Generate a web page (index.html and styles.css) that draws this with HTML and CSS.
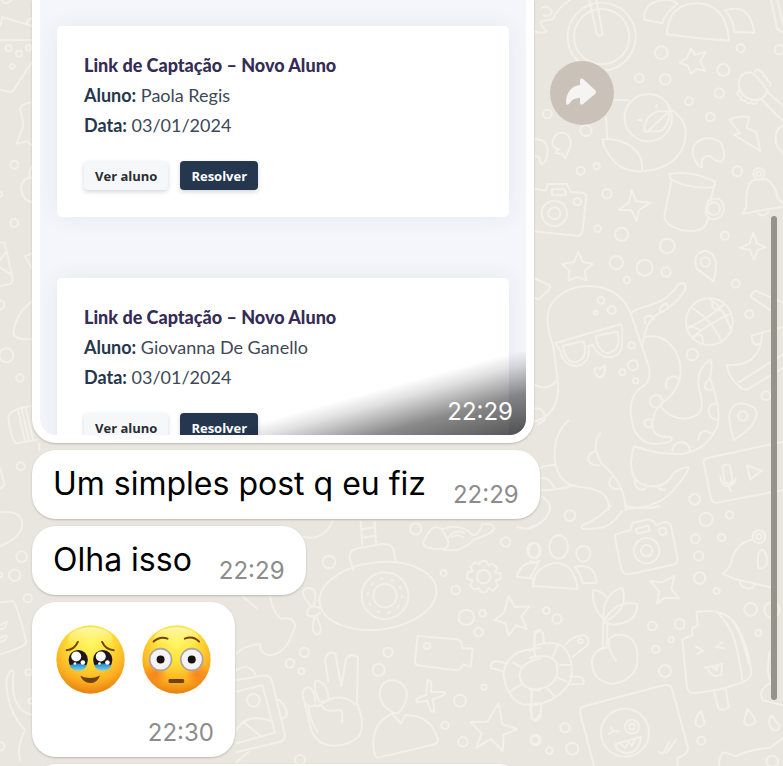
FILE: index.html
```html
<!DOCTYPE html>
<html lang="pt-BR">
  <head>
    <meta charset="UTF-8" />
    <meta name="viewport" content="width=device-width, initial-scale=1.0" />
    <title>Conversa</title>
    <link rel="stylesheet" href="styles.css">
  </head>
  <body>
    <!-- Papel de parede da conversa -->
    <svg class="wallpaper" viewBox="0 0 783 766" preserveAspectRatio="xMinYMin slice" aria-hidden="true">
      <!-- Topo, direita -->
      <g transform="translate(530 0) scale(.3333)">
        <circle cx="215" cy="110" r="102" /><circle cx="215" cy="110" r="83" />
        <path d="M178 0L200 102Q209 113 218 102L199 0M15 95Q38 100 50 94L36 78Q28 64 40 62L68 58Q84 22 120 0M36 22Q55 15 66 34Q60 52 42 46" />
        <path d="M410 103Q418 8 505 10Q590 16 597 122Q505 117 410 103ZM397 70L343 59Q340 14 385 3Q425-8 442 12Q407 36 397 70ZM585 31Q660 7 673 98L613 96Q610 55 585 31ZM723 0L742 88L760 96M742 0L760 76" />
        <path d="M483 146L495 164L526 157L511 184L525 212L499 207L483 222L474 198L449 187L471 174Z" />
        <path d="M626 250Q632 212 666 218L684 234L712 271Q704 303 671 300Q626 292 626 250ZM712 276L760 318M696 300L760 365M675 214Q684 202 692 216Q702 214 701 228Q714 230 711 243Q725 245 720 257M625 274Q618 286 632 290Q632 304 647 302Q652 316 663 306Q677 320 682 306M760 375Q728 393 740 435L760 463" />
        <path d="M598 359Q630 344 657 352L650 384L679 396L691 453L613 405L630 400Z" />
        <circle cx="355" cy="353" r="71" />
        <path d="M252 300L298 301M228 350L232 416M415 325Q475 355 466 418Q448 503 342 514Q292 517 260 492Q220 450 217 420Q240 411 290 431Q340 458 336 510M344 395Q340 348 385 334L418 333Q420 376 390 394ZM355 392L416 335M380 315L378 321M325 360L335 361" />
        <path d="M510 501Q481 470 490 440Q514 407 548 416Q578 422 578 443Q590 470 574 485Q556 486 540 467Q509 468 516 501ZM15 418Q54 418 53 452Q50 490 34 493L28 473L15 468M67 429Q72 396 101 398Q125 407 122 438L105 475L95 462L76 459L87 448Q70 446 67 429Z" />
        <path d="M425 540L403 648Q404 675 453 690Q507 700 527 676L535 652M552 560L542 598M419 522Q486 510 555 545Q557 565 530 563Q456 562 420 535ZM535 602Q570 586 580 613Q587 649 555 658Q522 660 530 618Z" /><circle cx="551" cy="626" r="19" />
        <path d="M305 570L318 604L362 608L327 630L320 663L304 631L266 629L297 608Z" />
        <path d="M638 641L649 621Q645 551 673 539L710 538Q738 555 743 594L760 612M638 641L760 620M684 641Q700 654 716 635" /><circle cx="687" cy="521" r="17" /><circle cx="687" cy="521" r="7" />
        <path d="M15 566L48 572L53 552L110 552L122 575L163 580Q172 586 168 600L158 690Q156 709 142 708L15 694M66 567L104 568L108 586L66 584Z" /><circle cx="73" cy="640" r="38" /><circle cx="73" cy="640" r="18" /><circle cx="142" cy="605" r="11" />
        <path d="M670 698L681 730L708 742L683 750L672 780L659 749L630 744L659 730Z" />
        <circle cx="394" cy="158" r="19" /><circle cx="328" cy="234" r="13" /><circle cx="406" cy="238" r="16" /><circle cx="580" cy="210" r="18" /><circle cx="632" cy="145" r="12" /><circle cx="748" cy="149" r="14" /><circle cx="568" cy="279" r="14" /><circle cx="477" cy="304" r="12" /><circle cx="541" cy="351" r="13" /><circle cx="52" cy="342" r="13" /><circle cx="168" cy="392" r="17" /><circle cx="152" cy="512" r="12" /><circle cx="200" cy="499" r="9" /><circle cx="231" cy="581" r="14" /><circle cx="622" cy="514" r="15" /><circle cx="203" cy="686" r="10" /><circle cx="275" cy="703" r="20" /><circle cx="585" cy="707" r="12" /><circle cx="412" cy="738" r="22" />
      </g>
      <!-- Polvo, bola e microfone -->
      <g transform="translate(530 250) scale(.3333)">
        <path d="M145 5L158 35L188 42L164 63L169 91L142 81L115 91L119 62L96 42L132 36ZM15 86L58 105Q66 112 54 122L27 148L15 145" />
        <path d="M15 515Q89 493 84 400Q78 350 70 290Q35 193 70 155Q108 108 180 108Q271 112 302 190L355 345Q366 385 345 405Q282 440 311 535Q340 600 420 575Q435 558 406 561Q354 557 371 498Q379 470 417 442Q467 391 445 322Q416 249 343 260M302 190Q315 177 360 166Q415 150 446 103Q473 91 465 120Q445 154 406 180Q350 204 343 260L337 285" />
        <path d="M76 279L272 223Q280 225 275 293Q268 322 233 322Q201 316 188 284L175 288Q184 338 141 348Q99 348 91 302ZM99 287L161 273Q177 332 132 337Q104 333 99 287ZM197 258L262 245Q277 299 234 310Q202 303 197 258Z" />
        <path d="M391 468Q417 505 465 506Q529 500 513 440Q488 363 541 329Q549 340 540 385Q580 492 558 538Q524 604 454 612Q380 614 312 588M312 588Q288 672 330 700Q400 728 430 670Q456 652 475 652Q478 663 440 708Q391 776 290 776M115 512Q70 549 74 630Q86 707 150 711Q242 716 236 780M210 550Q183 586 214 640Q286 700 287 780" />
        <path d="M346 220Q338 205 352 198Q365 195 373 208M390 184Q391 163 409 160L416 172M410 414Q404 390 422 381Q439 375 449 391M539 388Q522 398 526 415Q535 424 545 420M561 461Q538 457 536 485Q540 507 560 509M427 603Q431 573 460 577Q478 582 480 603M505 568Q507 544 528 542L542 550M194 604Q174 610 175 633Q186 648 207 646M245 682Q234 692 240 708Q251 721 269 716M315 686Q311 709 329 718Q343 722 350 710M381 710Q391 722 405 719M15 475Q47 475 45 510L24 523M15 405Q50 425 79 393M15 665Q39 643 75 645M15 693Q36 676 56 690L76 715M15 720Q70 724 137 706M36 740Q62 754 61 780M193 367Q193 346 210 357L225 346Q228 382 206 382Z" />
        <circle cx="379" cy="454" r="19" /><circle cx="355" cy="520" r="12" />
        <circle cx="538" cy="215" r="70" /><path d="M474 234Q528 210 583 163M488 260Q540 218 604 190M486 174Q548 210 574 276M540 148Q585 174 604 246M478 227L514 241M488 265Q520 236 519 282M547 159Q544 182 574 181" />
        <path d="M551 94L500 56Q485 10 525 2Q573 10 551 94ZM612 570Q598 526 598 500Q602 455 642 461Q694 469 674 512Q660 540 612 570ZM721 180L674 149Q656 139 670 126Q678 119 690 128L760 158M665 257L760 230M665 257Q666 291 690 282M696 252Q696 302 663 329Q635 349 591 344Q592 378 630 412Q641 423 656 416L760 353M628 396L760 312" /><circle cx="526" cy="36" r="14" /><circle cx="638" cy="498" r="14" />
        <path d="M760 575L529 625Q518 629 522 643L543 745Q549 761 562 758L760 720M651 646L695 662L661 689ZM577 650Q588 638 600 648L608 694Q598 708 584 696ZM571 679Q576 710 594 709Q615 706 617 684M596 709L603 724" />
        <circle cx="259" cy="38" r="20" /><circle cx="344" cy="53" r="24" /><circle cx="408" cy="66" r="14" /><circle cx="291" cy="90" r="10" /><circle cx="213" cy="151" r="10" /><circle cx="245" cy="180" r="12" /><circle cx="197" cy="188" r="6" /><circle cx="305" cy="286" r="10" /><circle cx="309" cy="346" r="15" /><circle cx="277" cy="367" r="9" /><circle cx="317" cy="392" r="8" /><circle cx="487" cy="314" r="17" /><circle cx="617" cy="101" r="12" /><circle cx="658" cy="193" r="12" /><circle cx="708" cy="437" r="13" /><circle cx="494" cy="748" r="16" />
      </g>
      <!-- Base, direita -->
      <g transform="translate(530 506) scale(.3333)">
        <path d="M276 15Q244 65 200 67Q139 75 159 57Q210 36 241 0M287 0Q350 14 387 0M0 64Q58 47 60 0" />
        <path d="M257 86L301 72L307 51L351 41Q368 37 378 58L401 49Q417 45 423 60L443 158Q443 172 430 176L295 205Q280 205 274 189L256 100ZM318 68L355 59L360 74L321 83Z" /><circle cx="350" cy="134" r="38" /><circle cx="350" cy="134" r="17" /><circle cx="398" cy="76" r="11" />
        <ellipse cx="86" cy="123" rx="28" ry="35" /><ellipse cx="160" cy="143" rx="21" ry="24" /><ellipse cx="14" cy="134" rx="18" ry="23" />
        <path d="M10 240Q13 178 80 170Q134 175 143 249ZM134 183Q194 167 200 230L158 232Q151 200 134 183ZM0 166L25 171L0 216" />
        <path d="M361 225L395 229L433 210L424 249L446 277L405 275L381 293L388 257Z" />
        <path d="M223 342Q182 301 190 252Q209 252 228 272M220 342Q216 265 276 244Q301 312 220 349Q256 280 322 294Q322 352 248 356L220 349L218 430M233 354L229 423M258 464Q231 430 237 400Q250 382 278 386Q333 397 320 484Q293 535 240 533Q183 521 186 461Q195 427 230 425" />
        <path d="M0 456Q55 440 79 468Q92 522 50 542Q30 552 0 550M0 434L17 419Q57 402 90 417Q130 440 125 515Q96 586 0 600M16 452L11 425M70 449L83 417M90 477L124 476M79 514L110 526M51 546L73 570M107 416Q124 391 160 388Q184 396 172 418L127 453M119 510L153 514Q165 520 159 534L116 535M13 415L15 378Q30 365 39 381L42 412M0 598L5 637Q21 654 32 629L34 595" /><circle cx="151" cy="405" r="7" />
        <path d="M500 318Q580 303 619 356Q653 414 664 493Q666 523 624 534Q545 560 485 561Q472 557 470 535L457 400L475 393L488 388L486 368L503 357ZM560 316Q598 353 614 404Q631 465 638 530M597 333Q632 365 656 472M552 558L565 606Q577 620 596 604L588 552M498 422L520 433L503 444M578 408L558 423L582 427M524 485Q549 482 577 473M532 485Q547 520 574 506L576 475M547 483L560 493L563 478" />
        <path d="M578 203Q601 190 608 151Q627 109 666 100M578 203L611 218L721 244M630 229Q638 252 667 246L674 233M684 174Q681 140 696 130Q715 145 710 174Q700 194 684 184Z" /><circle cx="687" cy="92" r="19" /><circle cx="687" cy="92" r="8" />
        <path d="M192 780L150 620Q149 604 165 600L400 538Q419 534 426 548L474 725Q475 746 442 756L443 780M386 738Q400 747 405 734L418 708M410 740L438 701" /><circle cx="285" cy="680" r="72" /><circle cx="306" cy="662" r="21" /><circle cx="306" cy="662" r="9" />
        <path d="M236 684L250 675L266 676M243 665L252 676M255 715Q294 705 333 692Q329 738 291 742Q260 739 255 715ZM271 713L286 727L296 706L306 720L315 698" />
        <path d="M513 615Q490 641 499 657Q515 670 524 650ZM652 609L642 648Q654 668 676 649Q677 635 652 609ZM725 628Q709 651 726 670Q746 681 748 659ZM567 780Q568 730 595 742L618 751Q651 732 721 725L760 695M718 438L713 495L722 530Q680 555 699 583L760 598" />
        <circle cx="120" cy="29" r="16" /><circle cx="528" cy="40" r="20" /><circle cx="599" cy="27" r="11" /><circle cx="496" cy="98" r="13" /><circle cx="575" cy="94" r="11" /><circle cx="506" cy="150" r="14" /><circle cx="509" cy="216" r="17" /><circle cx="560" cy="255" r="9" /><circle cx="49" cy="314" r="10" /><circle cx="81" cy="339" r="14" /><circle cx="367" cy="360" r="13" /><circle cx="449" cy="354" r="15" /><circle cx="424" cy="401" r="8" /><circle cx="377" cy="430" r="11" /><circle cx="405" cy="495" r="18" /><circle cx="662" cy="310" r="19" /><circle cx="726" cy="312" r="23" /><circle cx="685" cy="381" r="9" /><circle cx="105" cy="665" r="14" /><circle cx="17" cy="702" r="15" /><circle cx="127" cy="728" r="18" /><circle cx="58" cy="734" r="10" /><circle cx="514" cy="704" r="12" /><circle cx="727" cy="766" r="17" />
      </g>
      <!-- Submarino, mão, câmera e estrelas -->
      <g transform="translate(230 510) scale(.3333)">
        <ellipse cx="444" cy="258" rx="176" ry="101" transform="rotate(-7 444 258)" /><circle cx="465" cy="257" r="70" /><circle cx="465" cy="257" r="35" /><circle cx="465" cy="257" r="52" stroke-dasharray="5 28" />
        <path d="M370 181L358 140Q360 120 378 116L455 102Q487 101 491 120L496 151M397 105L392 35M438 99L434 35M394 58L435 52M396 83L437 77M270 294Q230 278 232 315Q255 326 270 308M246 291Q202 245 230 234Q268 230 251 287M253 324Q241 367 261 374Q284 367 260 323" />
        <path d="M580 98Q606 33 635 58Q672 108 641 116Q578 120 580 98ZM635 58Q690 36 729 76Q751 71 757 40M641 119Q695 129 733 88Q787 71 793 55Q787 38 765 43M654 85Q672 54 702 69M667 81Q685 70 700 82" />
        <path d="M749 163L751 155L768 152L776 166L787 160L802 174L795 186L812 190L811 208L797 212L804 227L790 243L776 234L768 247L752 246L747 234L733 239L720 225L728 212L710 205L713 187L728 184L721 171L734 157Z" /><circle cx="761" cy="200" r="20" />
        <path d="M836 258L854 291L898 289L874 319L891 357L858 346L836 377L826 339L793 330L822 308ZM806 580L817 643L861 657L821 674L818 723L784 687L739 713L755 671L722 636L772 635Z" />
        <path d="M563 378L680 388Q696 391 698 414L728 416L722 471L699 463Q693 483 677 481L563 466Q555 463 555 452ZM594 510Q608 512 603 546L645 546Q649 557 609 567L613 605L603 604L591 572L560 577Q553 563 588 556Z" /><circle cx="591" cy="408" r="9" />
        <path d="M262 665Q235 620 236 590M295 513L285 450Q293 420 316 430L334 529L348 447Q363 427 384 442L381 582Q410 647 384 682Q346 713 295 706Q246 695 238 635L218 558Q217 535 235 532Q254 535 257 587Q224 596 218 558M268 575Q247 524 258 513Q291 511 296 567Q284 580 268 575ZM263 590Q327 540 375 582M275 587Q284 608 330 600Q341 606 336 637" />
        <path d="M493 610Q450 588 449 550Q455 507 491 511Q534 520 530 562Q524 591 505 610ZM430 700Q431 635 486 612L513 640L527 615Q604 616 624 689Q625 701 605 705L445 743Q431 744 430 700Z" />
        <path d="M120 260Q130 310 154 327Q192 318 195 349Q171 434 118 436Q86 427 92 403Q43 405 20 430M40 260L80 295M20 510L102 496Q119 496 126 513L165 675Q166 691 149 696L20 726M20 545L97 525L135 668L20 700M20 480Q56 457 76 493M20 660Q49 605 128 635M42 638L96 681M144 568Q176 594 169 619L152 628M55 726L20 756" /><circle cx="70" cy="571" r="19" />
        <path d="M868 495Q875 454 930 446M868 495Q875 540 930 542M820 495Q827 432 889 420L930 414M820 495Q835 574 884 584L930 580M848 457L874 472M844 542L875 523M826 460L798 453Q779 457 784 474L821 485M913 414L914 371L930 360M905 540V621L914 631L930 615M860 201Q873 156 912 158L930 153M910 231Q906 200 930 178M860 201L907 205M862 51Q898 65 930 40M221 80Q279 95 307 35" /><ellipse cx="910" cy="121" rx="18" ry="23" />
        <circle cx="297" cy="156" r="19" /><circle cx="557" cy="57" r="17" /><circle cx="827" cy="96" r="14" /><circle cx="641" cy="189" r="9" /><circle cx="677" cy="240" r="13" /><circle cx="709" cy="322" r="23" /><circle cx="758" cy="310" r="10" /><circle cx="746" cy="366" r="13" /><circle cx="474" cy="427" r="14" /><circle cx="446" cy="480" r="18" /><circle cx="223" cy="427" r="14" /><circle cx="180" cy="460" r="13" /><circle cx="214" cy="484" r="9" /><circle cx="762" cy="532" r="8" /><circle cx="690" cy="572" r="18" /><circle cx="645" cy="646" r="11" /><circle cx="699" cy="695" r="14" /><circle cx="915" cy="690" r="12" /><circle cx="210" cy="750" r="15" />
      </g>
      <!-- Faixa da esquerda -->
      <g transform="scale(.3333)">
        <path d="M0 77Q7 65 5 51L96 77M81 72Q82 56 100 53M0 121L100 120M0 269L31 277Q40 275 45 264L100 180M100 306Q62 310 60 328Q74 373 67 385L50 431L80 424L100 439M100 534Q70 530 63 560Q65 604 100 607M100 495Q81 519 92 531M0 727H12L20 754L37 833Q40 849 27 853L0 858M17 757L0 781M0 803L34 824M100 758L75 769L100 811M100 902Q48 935 40 1001Q46 1020 100 1018M5 0Q17 19 34 0" />
        <circle cx="26" cy="144" r="9" /><circle cx="57" cy="161" r="9" /><circle cx="86" cy="143" r="8" /><circle cx="37" cy="199" r="7" /><circle cx="43" cy="494" r="12" /><circle cx="0" cy="583" r="7" /><circle cx="43" cy="669" r="12" /><circle cx="0" cy="914" r="13" /><circle cx="19" cy="1066" r="21" /><circle cx="60" cy="1134" r="11" />
        <g transform="translate(0 1140)">
          <path d="M92 78Q25 88 25 115Q35 184 50 190L110 180M54 90L75 184M65 87L87 182M77 84L99 178M0 264L14 315L0 326M0 396Q66 390 67 435Q63 473 0 499M0 668L38 663Q49 666 79 785Q75 797 65 800L0 825M0 736L20 725Q20 750 0 747M0 775Q21 760 20 771Q19 782 0 786M19 900Q32 860 41 876Q27 991 97 1005M19 900Q20 993 75 1050Q49 1102 60 1140M118 190V210" />
          <circle cx="62" cy="259" r="12" /><circle cx="65" cy="530" r="16" /><circle cx="44" cy="586" r="17" /><circle cx="83" cy="655" r="12" /><circle cx="86" cy="877" r="10" /><circle cx="0" cy="585" r="7" /><circle cx="94" cy="963" r="8" /><circle cx="0" cy="1099" r="13" />
        </g>
      </g>
    </svg>

    <main class="chat">
      <div class="message-row">
        <article class="bubble photo-bubble">
          <div class="photo">
            <section class="card">
              <h2>Link de Captação – Novo Aluno</h2>
              <p><strong>Aluno:</strong> Paola Regis</p>
              <p><strong>Data:</strong> 03/01/2024</p>
              <div class="actions">
                <button type="button" class="btn btn-light">Ver aluno</button>
                <button type="button" class="btn btn-dark">Resolver</button>
              </div>
            </section>
            <section class="card">
              <h2>Link de Captação – Novo Aluno</h2>
              <p><strong>Aluno:</strong> Giovanna De Ganello</p>
              <p><strong>Data:</strong> 03/01/2024</p>
              <div class="actions">
                <button type="button" class="btn btn-light">Ver aluno</button>
                <button type="button" class="btn btn-dark">Resolver</button>
              </div>
            </section>
            <div class="photo-shade"><time>22:29</time></div>
          </div>
        </article>
        <button type="button" class="forward" aria-label="Encaminhar">
          <svg viewBox="0 0 64 64" aria-hidden="true">
            <path d="M16 42C16 32 21 25 30 24V20Q30 16 33 18L45 29Q47 31 45 33L33 43Q30 45 30 41V37C24 37 22 39 19 43Q16 45 16 42Z" />
          </svg>
        </button>
      </div>

      <article class="bubble text-bubble">
        <p>Um simples post q eu fiz</p>
        <time>22:29</time>
      </article>

      <article class="bubble text-bubble">
        <p>Olha isso</p>
        <time>22:29</time>
      </article>

      <article class="bubble emoji-bubble">
        <div class="emojis">
          <!-- Rosto segurando o choro -->
          <svg class="emoji" viewBox="20 29 208 208" role="img" aria-label="🥹">
            <defs>
              <radialGradient id="face" cx=".5" cy=".25" r=".77">
                <stop offset="0" stop-color="#fff75f" />
                <stop offset=".4" stop-color="#ffdf38" />
                <stop offset=".75" stop-color="#fcae20" />
                <stop offset="1" stop-color="#e57c0d" />
              </radialGradient>
              <linearGradient id="shine" x2="0" y2="1">
                <stop offset="0" stop-color="#fffbd0" stop-opacity=".8" />
                <stop offset="1" stop-color="#fff75f" stop-opacity="0" />
              </linearGradient>
              <linearGradient id="tear" x2="0" y2="1">
                <stop offset="0" stop-color="#1786c9" />
                <stop offset="1" stop-color="#7bd6ee" />
              </linearGradient>
              <radialGradient id="blush">
                <stop offset="0" stop-color="#f4511e" stop-opacity=".5" />
                <stop offset="1" stop-color="#f4511e" stop-opacity="0" />
              </radialGradient>
            </defs>
            <circle cx="124" cy="133" r="103" fill="url(#face)" />
            <ellipse cx="124" cy="70" rx="67" ry="34" fill="url(#shine)" />
            <path d="M52 105Q75 104 86 80M159 80Q169 103 194 105" fill="none" stroke="#70420d" stroke-width="6" stroke-linecap="round" />
            <ellipse cx="87" cy="134" rx="29" ry="30" fill="#20151a" />
            <ellipse cx="161" cy="134" rx="29" ry="30" fill="#20151a" />
            <path d="M61 150Q86 140 113 150Q106 166 87 167Q68 166 61 150ZM135 150Q162 140 187 150Q180 166 161 167Q142 166 135 150Z" fill="url(#tear)" />
            <g fill="#fff">
              <circle cx="81" cy="124" r="15" /><circle cx="155" cy="124" r="15" />
              <circle cx="101" cy="142" r="7" /><circle cx="175" cy="142" r="7" />
              <circle cx="77" cy="145" r="4" /><circle cx="151" cy="145" r="4" />
            </g>
            <path d="M93 182Q123 196 153 181Q144 204 123 204Q102 203 93 182Z" fill="#70420d" />
          </svg>
          <!-- Rosto corado -->
          <svg class="emoji" viewBox="277 29 208 208" role="img" aria-label="😳">
            <circle cx="381" cy="133" r="103" fill="url(#face)" />
            <ellipse cx="381" cy="70" rx="67" ry="34" fill="url(#shine)" />
            <circle cx="318" cy="175" r="36" fill="url(#blush)" />
            <circle cx="443" cy="175" r="36" fill="url(#blush)" />
            <path d="M312 79Q331 62 354 70M406 70Q431 61 449 79" fill="none" stroke="#70420d" stroke-width="6" stroke-linecap="round" />
            <g fill="#f5f3f7" stroke="#a9a4a4" stroke-width="5">
              <circle cx="333" cy="133" r="33" /><circle cx="427" cy="133" r="33" />
            </g>
            <circle cx="333" cy="133" r="12" fill="#17110f" />
            <circle cx="427" cy="133" r="12" fill="#17110f" />
            <rect x="357" y="192" width="47" height="12" rx="4" fill="#70420d" />
          </svg>
        </div>
        <time>22:30</time>
      </article>

      <article class="bubble next-bubble"></article>
    </main>

    <div class="scroll-thumb"></div>
  </body>
</html>
```

FILE: styles.css
```css
* {
  box-sizing: border-box;
}
body {
  position: relative;
  height: 100vh;
  margin: 0;
  overflow: hidden;
  background-color: #e9e6df;
  font-family: Inter, "Liberation Sans", sans-serif;
}
h2,
p {
  margin: 0;
}
.wallpaper {
  position: absolute;
  inset: 0;
  width: 100%;
  height: 100%;
  fill: none;
  stroke: #f3f0e8;
  stroke-width: 6px;
  stroke-linecap: round;
  stroke-linejoin: round;
}
.chat {
  position: relative;
  display: flex;
  flex-direction: column;
  align-items: flex-start;
  gap: 7px;
  height: 100%;
  padding: 0 32px;
  overflow: hidden;
}
.message-row {
  display: flex;
  flex: none;
  align-items: flex-start;
  gap: 16px;
  width: 100%;
}
.bubble {
  flex: none;
  background-color: #fff;
  border-radius: 24px;
  box-shadow: 0 1px 2px rgba(60, 50, 40, 0.25);
}

/* Foto enviada */
.photo-bubble {
  flex: 0 1 502px;
  padding: 0 8px 8px;
  border-radius: 0 0 24px 24px;
}
.photo {
  position: relative;
  display: flex;
  flex-direction: column;
  gap: 61px;
  max-height: 435px;
  padding: 26px 17px 0;
  overflow: hidden;
  border-radius: 0 0 16px 16px;
  background-color: #f5f6fb;
}
.card {
  flex: none;
  padding: 24px 27px 27px;
  border-radius: 5px;
  background-color: #fff;
  box-shadow: 0 0 24px rgba(40, 50, 80, 0.07);
  color: #3e4856;
  font-family: Lato, "Open Sans", sans-serif;
  font-size: 18px;
  line-height: 30px;
}
.card h2 {
  color: #352c55;
  font-size: 18px;
  font-weight: 900;
}
.card strong {
  color: #26364c;
}
.actions {
  display: flex;
  gap: 12px;
  margin-top: 21px;
}
.btn {
  height: 29px;
  padding: 0 11px;
  border: none;
  border-radius: 4px;
  box-shadow: 0 2px 4px rgba(30, 40, 60, 0.18);
  font-family: "Open Sans", Lato, sans-serif;
  font-size: 13px;
  font-weight: 700;
  cursor: pointer;
}
.btn-light {
  background-color: #f6f7f9;
  color: #292d32;
}
.btn-dark {
  background-color: #25364f;
  color: #fff;
}
.photo-shade {
  position: absolute;
  right: 0;
  bottom: 0;
  display: flex;
  align-items: flex-end;
  justify-content: flex-end;
  width: 300px;
  height: 83px;
  padding: 0 13px 8px;
  background: linear-gradient(
    to bottom right,
    transparent 48%,
    rgba(0, 0, 0, 0.12) 57%,
    rgba(0, 0, 0, 0.46) 75%,
    rgba(0, 0, 0, 0.68) 100%
  );
}
time {
  color: #8c8c8c;
  font-size: 24px;
  line-height: 30px;
}
.photo-shade time {
  color: #fff;
}
.forward {
  flex: none;
  width: 64px;
  height: 64px;
  margin-top: 61px;
  padding: 0;
  border: none;
  border-radius: 50%;
  background-color: #cac2b9;
  cursor: pointer;
}
.forward svg {
  display: block;
  fill: #f6f4f2;
}

/* Mensagens de texto */
.text-bubble {
  display: flex;
  align-items: flex-end;
  gap: 27px;
  padding: 12px 21px 9px;
}
.text-bubble p {
  padding-bottom: 4px;
  color: #000;
  font-size: 32px;
  line-height: 44px;
}

.emoji-bubble {
  display: flex;
  flex-direction: column;
  align-items: flex-end;
  gap: 24px;
  padding: 23px 21px 9px;
}
.emojis {
  display: flex;
  gap: 17px;
  padding: 0 3px;
}
.emoji {
  width: 69px;
  height: 69px;
}
.next-bubble {
  width: 491px;
  max-width: 100%;
  height: 69px;
}
.scroll-thumb {
  position: absolute;
  top: 216px;
  right: 6px;
  width: 6px;
  height: 484px;
  border-radius: 3px;
  background-color: #969389;
}
```
